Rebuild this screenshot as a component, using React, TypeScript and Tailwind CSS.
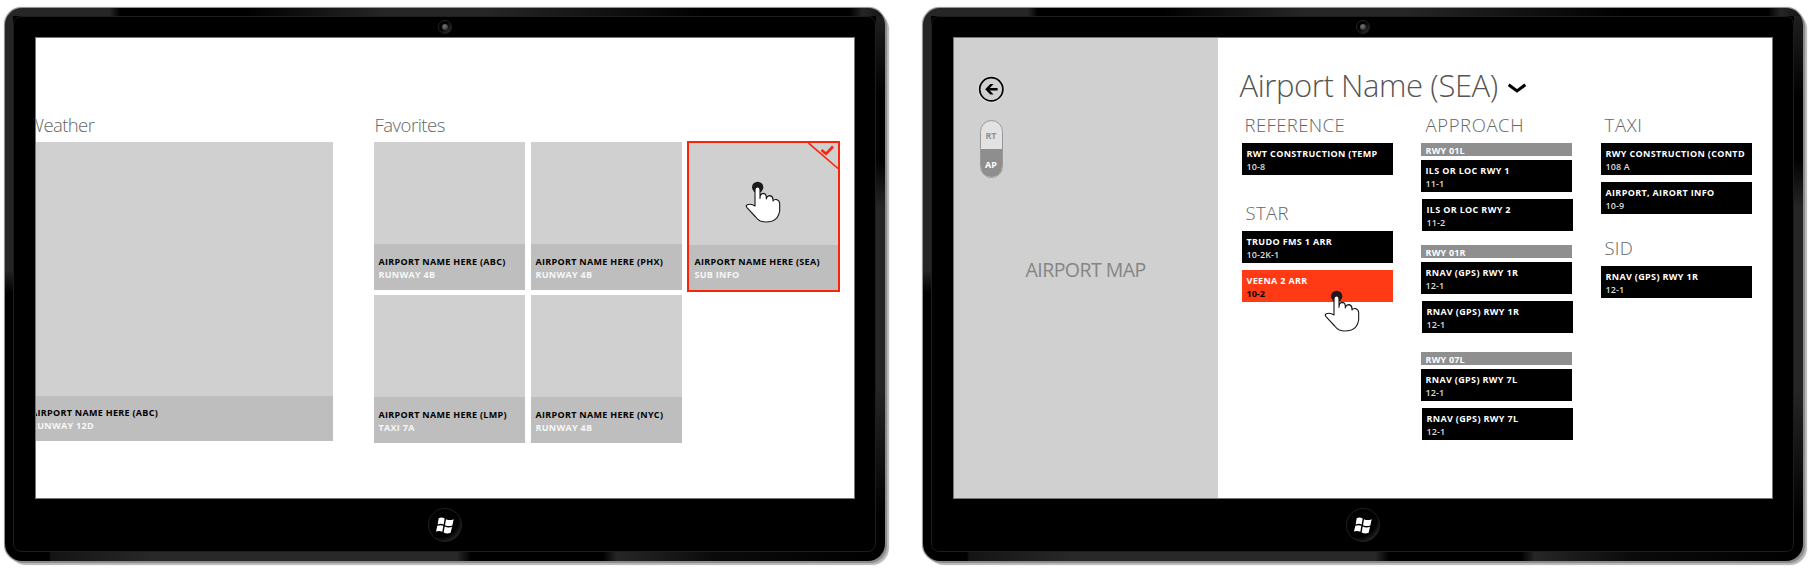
import type { ReactNode } from "react";

function WindowsLogo() {
  return (
    <svg viewBox="0 0 54 50" className="h-[17px] w-[18px]" fill="#fff">
      <path d="M8 3 Q17 -1 26 4 L23 22 Q14 18 5 22 Z" />
      <path d="M30 6 Q41 11 53 6 L49 25 Q38 29 27 24 Z" />
      <path d="M4 26 Q13 22 22 26 L19 44 Q9 39 0 43 Z" />
      <path d="M26 28 Q37 33 48 29 L44 47 Q33 52 23 46 Z" />
    </svg>
  );
}

function TapHand({ className }: { className: string }) {
  return (
    <svg viewBox="-2 -2 108 126" className={`absolute h-[42px] w-[36px] ${className}`}>
      <circle cx="36" cy="17" r="17" fill="#1c1a1d" />
      <path
        d="M28 71 L28 24 Q28 16 36 16 Q43 16 43 24 L43 50 Q43 36 52 35 Q61 35 62 46 L62 52 Q64 42 73 42 Q82 44 82 54 L82 58 Q85 52 94 54 Q102 57 102 66 L102 88 Q98 112 80 118 Q60 124 44 118 Q36 114 30 106 L4 78 Q-1 72 5 69 Q17 65 28 73 Z"
        fill="#fff"
        stroke="#1a1a1a"
        strokeWidth="3.4"
        strokeLinejoin="round"
      />
    </svg>
  );
}

function Tablet({ children }: { children: ReactNode }) {
  return (
    <div className="h-[553px] w-[880px] shrink-0 rounded-[17px] bg-black bg-[linear-gradient(90deg,#262626_0,#262626_105px,#000_115px,#000_240px,#262626_380px,#262626_480px,#000_700px,#000_845px,#262626_858px,#111_100%),linear-gradient(90deg,#000_0,#000_44px,#141414_46px,#282828_150px,#282828_452px,#000_466px,#000_598px,#262626_612px,#0a0a0a_710px,#000_100%),linear-gradient(180deg,#262626_0,#262626_262px,#000_285px,#000_100%),linear-gradient(180deg,#222_0,#000_90px,#000_150px,#262626_200px,#262626_380px,#000_510px)] bg-[size:100%_8px,100%_9px,8px_100%,9px_100%] bg-[position:0_0,0_100%,0_0,100%_0] bg-no-repeat pt-2 pr-[9px] pb-[9px] pl-2 shadow-[0_0_1px_0.5px_#8a8a8a,2px_2px_0_0_#8f8c8e,4px_4px_1px_0_#b8b5b7]">
      <div className="flex h-[536px] w-[863px] flex-col items-center rounded-[8px] border border-[#1d1d1d] bg-black">
        <div className="flex h-5 w-full items-center justify-center">
          <div className="flex size-[14px] items-center justify-center rounded-full border border-[#242424] bg-[linear-gradient(135deg,#000_40%,#333)]">
            <div className="size-[6px] rounded-full bg-[radial-gradient(circle_at_40%_35%,#777,#222)]" />
          </div>
        </div>
        <div className="relative h-[462px] w-[820px] overflow-hidden border border-[#777] bg-white">
          {children}
        </div>
        <div className="flex h-[52px] w-full items-center justify-center">
          <div className="flex size-[34px] items-center justify-center rounded-full border border-[#202020] bg-[radial-gradient(circle_at_35%_30%,#000_60%,#4a4a4a)]">
            <WindowsLogo />
          </div>
        </div>
      </div>
    </div>
  );
}

const heading = "h-6 whitespace-nowrap font-light leading-6 text-[#666]";

function Caption({ name, info, box = "h-[46px] pt-[11px] pl-[5px]" }: { name: string; info: string; box?: string }) {
  return (
    <div className={`whitespace-nowrap bg-[#bebebe] text-[9px] leading-[13px] ${box}`}>
      <div className="font-bold tracking-[0.3px] text-black">{name}</div>
      <div className="font-bold tracking-[0.3px] text-[#f7f7f7]">{info}</div>
    </div>
  );
}

function Tile({ name, info }: { name: string; info: string }) {
  return (
    <div className="flex h-[148px] w-[151px] flex-col justify-end bg-[#d0d0d0]">
      <Caption name={name} info={info} />
    </div>
  );
}

function SelectedTile() {
  return (
    <div className="relative -mt-px -ml-px flex h-[151px] w-[153px] flex-col justify-end border-2 border-[#fb2408] bg-[#d0d0d0]">
      <svg viewBox="0 0 30 27" className="absolute top-0 right-0 h-[27px] w-[30px]" fill="none" stroke="#fb2408">
        <path d="M0.5 0 L30 25.5" strokeWidth="1.6" />
        <path d="M13.5 7 L18 10.8 L25 3.5" strokeWidth="2.6" />
      </svg>
      <TapHand className="top-[38px] left-[56px]" />
      <Caption name="AIRPORT NAME HERE (SEA)" info="SUB INFO" box="h-[45px] pt-[10px] pl-[6px]" />
    </div>
  );
}

function HubScreen() {
  return (
    <Tablet>
      <div className="flex h-full pt-[75px]">
        <section className="w-[297px] shrink-0">
          <h2 className={`${heading} -ml-[8px] text-[18.5px] tracking-[-0.6px]`}>Weather</h2>
          <div className="mt-[5px] flex h-[299px] flex-col justify-end overflow-hidden bg-[#d0d0d0]">
            <div className="bg-[#bebebe]">
              <div className="-ml-[9.5px]">
                <Caption name="AIRPORT NAME HERE (ABC)" info="RUNWAY 12D" box="h-[45px] pt-[10px] pl-[5px]" />
              </div>
            </div>
          </div>
        </section>
        <section className="ml-[41px] shrink-0">
          <h2 className={`${heading} ml-px text-[18.5px] tracking-[-0.5px]`}>Favorites</h2>
          <div className="mt-[5px] grid grid-cols-[151px_151px_152px] items-start gap-x-[6px] gap-y-[5px]">
            <Tile name="AIRPORT NAME HERE (ABC)" info="RUNWAY 4B" />
            <Tile name="AIRPORT NAME HERE (PHX)" info="RUNWAY 4B" />
            <div className="h-[148px]">
              <SelectedTile />
            </div>
            <Tile name="AIRPORT NAME HERE (LMP)" info="TAXI 7A" />
            <Tile name="AIRPORT NAME HERE (NYC)" info="RUNWAY 4B" />
          </div>
        </section>
      </div>
    </Tablet>
  );
}

function Chart({ name, code, active, className = "" }: { name: string; code: string; active?: boolean; className?: string }) {
  return (
    <div
      className={`relative h-[32px] w-[151px] whitespace-nowrap pt-[4px] pl-[5px] text-[9px] leading-[13px] ${
        active ? "bg-[#ff3a14]" : "bg-black"
      } ${className}`}
    >
      <div className="font-bold tracking-[0.34px] text-white">{name}</div>
      <div className={active ? "font-bold text-black" : "font-semibold tracking-[0.1px] text-[#ddd]"}>{code}</div>
      {active && <TapHand className="top-[20px] left-[82px]" />}
    </div>
  );
}

function Runway({ children, className = "" }: { children: ReactNode; className?: string }) {
  return (
    <div className={`h-[13px] w-[151px] bg-[#8f8f8f] pl-[5px] text-[9px] font-bold leading-[15px] tracking-[0.2px] text-white ${className}`}>
      {children}
    </div>
  );
}

function AirportScreen() {
  return (
    <Tablet>
      <div className="flex h-full">
        <aside className="flex w-[264px] shrink-0 flex-col bg-[#d0d0d0] pt-[38px] pl-[24px]">
          <svg viewBox="0 0 27 27" className="size-[27px]" fill="none">
            <circle cx="13.3" cy="13.3" r="12.6" stroke="#e4e4e4" strokeWidth="1.4" />
            <circle cx="13.3" cy="13.3" r="11.6" stroke="#000" strokeWidth="1.7" />
            <path d="M7.2 13.3 L12.3 8 L15.6 8 L11.8 12.1 L19.6 12.1 L19.6 14.5 L11.8 14.5 L15.6 18.6 L12.3 18.6 Z" fill="#000" />
          </svg>
          <div className="mt-[17px] ml-[2px] h-[58px] w-[23px] overflow-hidden rounded-full border border-[#999] bg-[#e2e2e2] text-center text-[9px] font-bold">
            <div className="h-[28px] pt-[2px] leading-[26px] text-[#929292]">RT</div>
            <div className="h-[29px] bg-[#8e8e8e] leading-[31px] text-white">AP</div>
          </div>
          <div className="mt-[80px] ml-[48px] whitespace-nowrap text-[19.5px] leading-6 tracking-[-0.55px] text-[#858585]">AIRPORT MAP</div>
        </aside>
        <main className="pt-[27px] pl-[22px]">
          <div className="flex h-10 items-start">
            <h1 className="w-[268px] whitespace-nowrap text-[31px] font-light leading-10 tracking-[-0.4px] text-[#555]">Airport Name (SEA)</h1>
            <svg viewBox="0 0 18 11" className="mt-[18px] h-[11px] w-[18px]" fill="none" stroke="#000" strokeWidth="3">
              <path d="M0.7 1.8 L9 8 L17.3 1.8" />
            </svg>
          </div>
          <div className="flex pt-[8px] pl-[2px]">
            <section className="w-[179px]">
              <h2 className={`${heading} ml-[3px] text-[18.5px] tracking-[0.4px]`}>REFERENCE</h2>
              <Chart className="mt-[6px]" name="RWT CONSTRUCTION (TEMP" code="10-8" />
              <h2 className={`${heading} mt-[26px] ml-[4px] text-[18.5px] tracking-[0.4px]`}>STAR</h2>
              <Chart className="mt-[6px]" name="TRUDO FMS 1 ARR" code="10-2K-1" />
              <Chart className="mt-[7px]" name="VEENA 2 ARR" code="10-2" active />
            </section>
            <section className="w-[180px]">
              <h2 className={`${heading} ml-[5px] text-[18.5px] tracking-[0.6px]`}>APPROACH</h2>
              <Runway className="mt-[6px]">RWY 01L</Runway>
              <Chart className="mt-[4px]" name="ILS OR LOC RWY 1" code="11-1" />
              <Chart className="mt-[7px] ml-px" name="ILS OR LOC RWY 2" code="11-2" />
              <Runway className="mt-[14px]">RWY 01R</Runway>
              <Chart className="mt-[4px]" name="RNAV (GPS) RWY 1R" code="12-1" />
              <Chart className="mt-[7px] ml-px" name="RNAV (GPS) RWY 1R" code="12-1" />
              <Runway className="mt-[19px]">RWY 07L</Runway>
              <Chart className="mt-[4px]" name="RNAV (GPS) RWY 7L" code="12-1" />
              <Chart className="mt-[7px] ml-px" name="RNAV (GPS) RWY 7L" code="12-1" />
            </section>
            <section className="w-[151px]">
              <h2 className={`${heading} ml-[4px] text-[18.5px] tracking-[0.7px]`}>TAXI</h2>
              <Chart className="mt-[6px]" name="RWY CONSTRUCTION (CONTD" code="108 A" />
              <Chart className="mt-[7px]" name="AIRPORT, AIRORT INFO" code="10-9" />
              <h2 className={`${heading} mt-[22px] ml-[4px] text-[18.5px] tracking-[0.2px]`}>SID</h2>
              <Chart className="mt-[6px]" name="RNAV (GPS) RWY 1R" code="12-1" />
            </section>
          </div>
        </main>
      </div>
    </Tablet>
  );
}

export default function App() {
  return (
    <div className="flex h-[580px] w-[1813px] gap-[38px] overflow-hidden bg-white pt-2 pl-[5px] font-['Open_Sans','Noto_Sans',sans-serif]">
      <HubScreen />
      <AirportScreen />
    </div>
  );
}
